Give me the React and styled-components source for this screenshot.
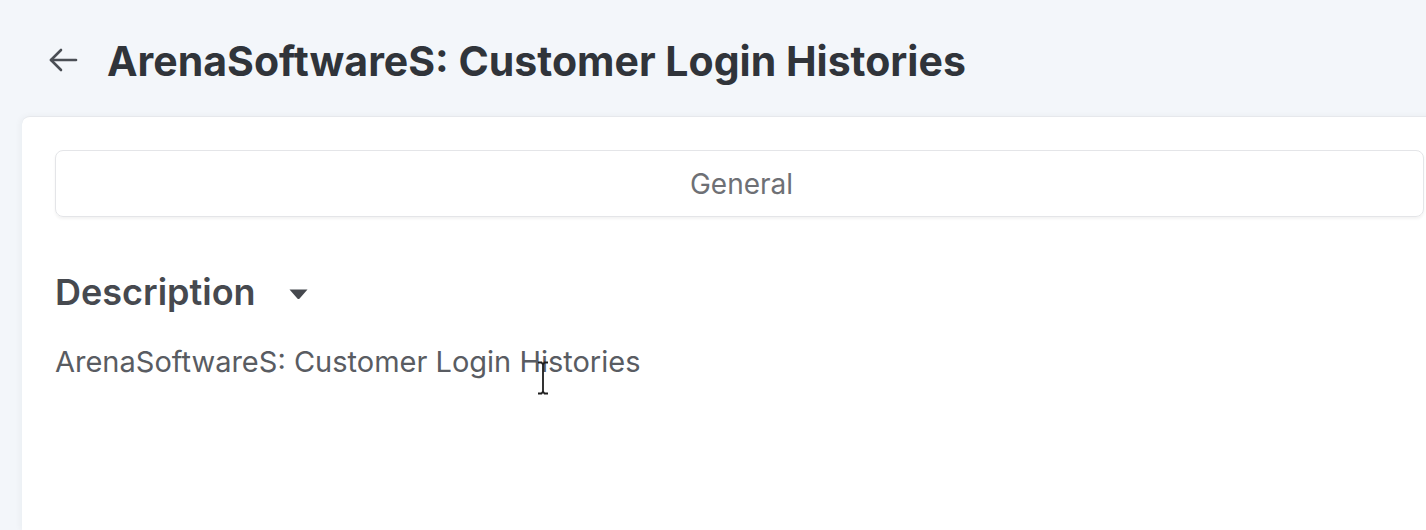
import React from 'react';
import styled, { createGlobalStyle } from 'styled-components';

const GlobalStyle = createGlobalStyle`
  html, body {
    margin: 0;
    padding: 0;
    background: #f3f6fa;
    overflow: hidden;
  }
  body {
    font-family: Inter, "Noto Sans", sans-serif;
  }
`;

const Page = styled.div`
  width: 1426px;
  height: 530px;
  display: flex;
  flex-direction: column;
  background: #f3f6fa;
`;

const Header = styled.div`
  height: 116px;
  display: flex;
  align-items: center;
  padding: 8px 0 0 48px;
  gap: 29px;
  box-sizing: border-box;
`;

const BackButton = styled.button`
  border: none;
  background: none;
  padding: 0;
  margin-top: -4px;
  display: flex;
  align-items: center;
  color: #4a4e55;
  cursor: pointer;
`;

const Title = styled.h1`
  margin: 0;
  font-size: 41px;
  line-height: 1.2;
  font-weight: 700;
  color: #30343a;
`;

const Card = styled.div`
  flex: 1;
  margin-left: 22px;
  margin-right: -40px;
  background: #fff;
  border-top: 1px solid #e6e8ec;
  border-top-left-radius: 8px;
  box-shadow: -2px 0 6px rgba(30, 40, 60, 0.04);
  padding: 33px 0 0 33px;
  position: relative;
`;

const TabBar = styled.div`
  width: 1369px;
  height: 67px;
  border: 1px solid #e4e5e8;
  border-radius: 8px;
  box-shadow: 0 2px 3px rgba(0, 0, 0, 0.05);
  display: flex;
  align-items: center;
  justify-content: center;
  box-sizing: border-box;
`;

const Tab = styled.span`
  font-size: 28px;
  color: #6e7075;
  padding-left: 4px;
`;

const SectionHeader = styled.div`
  margin-top: 54px;
  display: flex;
  align-items: center;
  gap: 32px;
`;

const SectionTitle = styled.h2`
  margin: 0;
  font-size: 36px;
  line-height: 1.2;
  font-weight: 600;
  color: #46494f;
`;

const Caret = styled.svg`
  display: block;
  margin-top: 2px;
`;

const Body = styled.p`
  margin: 31px 0 0;
  font-size: 29px;
  line-height: 1.2;
  color: #595c62;
`;

const TextCursor = styled.svg`
  position: absolute;
  left: 513px;
  top: 244px;
`;

const ArrowIcon = () => (
  <svg width="30" height="26" viewBox="0 0 30 26" fill="none" stroke="currentColor" strokeWidth="2.6" strokeLinecap="round" strokeLinejoin="round">
    <path d="M28 13H3" />
    <path d="M13 3L3 13l10 10" />
  </svg>
);

export default function App() {
  return (
    <Page>
      <GlobalStyle />
      <Header>
        <BackButton aria-label="Back">
          <ArrowIcon />
        </BackButton>
        <Title>ArenaSoftwareS: Customer Login Histories</Title>
      </Header>
      <Card>
        <TabBar>
          <Tab>General</Tab>
        </TabBar>
        <SectionHeader>
          <SectionTitle>Description</SectionTitle>
          <Caret width="21" height="12" viewBox="0 0 21 12">
            <path d="M1.5 1.5h18L11.6 10.4a1.5 1.5 0 0 1-2.2 0z" fill="#45484e" />
          </Caret>
        </SectionHeader>
        <Body>ArenaSoftwareS: Customer Login Histories</Body>
        <TextCursor width="16" height="34" viewBox="0 0 16 34">
          <path d="M3 1.5h3.5L8 3.5l1.5-2H13M8 3.5v27M3 32.5h3.5L8 30.5l1.5 2H13" fill="none" stroke="#1e1e1e" strokeWidth="1.8" />
        </TextCursor>
      </Card>
    </Page>
  );
}
